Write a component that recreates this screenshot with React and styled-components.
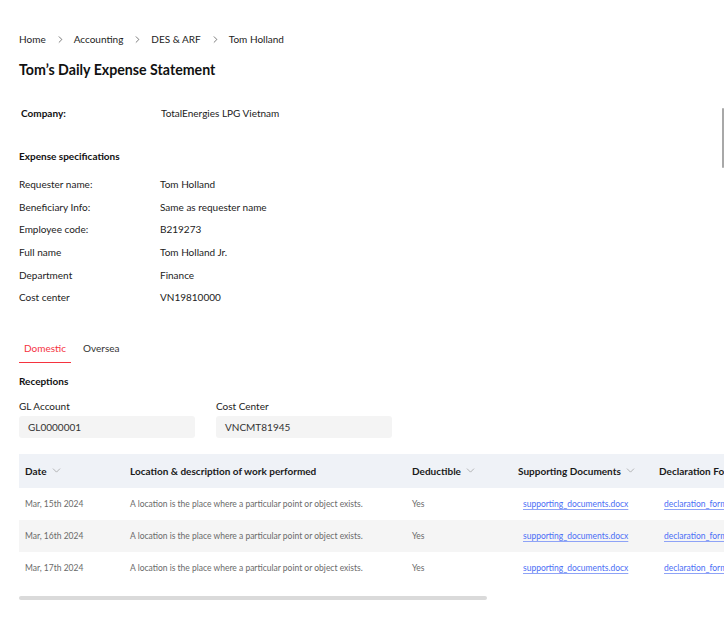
import React from "react";
import styled, { createGlobalStyle } from "styled-components";
import { ChevronDown, ChevronRight } from "lucide-react";

const GlobalStyle = createGlobalStyle`
  html, body {
    margin: 0;
    padding: 0;
    background: #fff;
    overflow: hidden;
  }
  body {
    font-family: Lato, "Noto Sans", sans-serif;
    color: #222;
  }
`;

const specs = [
  ["Requester name:", "Tom Holland"],
  ["Beneficiary Info:", "Same as requester name"],
  ["Employee code:", "B219273"],
  ["Full name", "Tom Holland Jr."],
  ["Department", "Finance"],
  ["Cost center", "VN19810000"],
];

const rows = [
  { date: "Mar, 15th 2024" },
  { date: "Mar, 16th 2024" },
  { date: "Mar, 17th 2024" },
];

const columns = [
  { title: "Date", width: 105, sort: true },
  { title: "Location & description of work performed", width: 282 },
  { title: "Deductible", width: 106, sort: true },
  { title: "Supporting Documents", width: 141, sort: true },
  { title: "Declaration Form", width: 160 },
];

const App = () => {
  return (
    <Page>
      <GlobalStyle />
      <Breadcrumb>
        {["Home", "Accounting", "DES & ARF", "Tom Holland"].map((item, i, arr) => (
          <React.Fragment key={item}>
            <span>{item}</span>
            {i < arr.length - 1 && (
              <Sep>
                <ChevronRight size={11} strokeWidth={1.4} />
              </Sep>
            )}
          </React.Fragment>
        ))}
      </Breadcrumb>

      <Title>Tom’s Daily Expense Statement</Title>

      <CompanyRow>
        <CompanyLabel>Company:</CompanyLabel>
        <Value>TotalEnergies LPG Vietnam</Value>
      </CompanyRow>

      <SectionTitle>Expense specifications</SectionTitle>
      <SpecList>
        {specs.map(([label, value]) => (
          <SpecRow key={label}>
            <Label>{label}</Label>
            <Value>{value}</Value>
          </SpecRow>
        ))}
      </SpecList>

      <Tabs>
        <Tab active>Domestic</Tab>
        <Tab>Oversea</Tab>
      </Tabs>

      <Receptions>Receptions</Receptions>
      <Fields>
        <Field>
          <FieldLabel>GL Account</FieldLabel>
          <Input>GL0000001</Input>
        </Field>
        <Field>
          <FieldLabel>Cost Center</FieldLabel>
          <Input>VNCMT81945</Input>
        </Field>
      </Fields>

      <Table>
        <HeadRow>
          {columns.map((c) => (
            <HeadCell key={c.title} w={c.width}>
              {c.title}
              {c.sort && (
                <SortIcon>
                  <ChevronDown size={13} strokeWidth={1.3} />
                </SortIcon>
              )}
            </HeadCell>
          ))}
        </HeadRow>
        {rows.map((r, i) => (
          <BodyRow key={r.date} striped={i % 2 === 1}>
            <Cell w={columns[0].width}>{r.date}</Cell>
            <Cell w={columns[1].width}>
              A location is the place where a particular point or object exists.
            </Cell>
            <Cell w={columns[2].width}>Yes</Cell>
            <Cell w={columns[3].width} link>
              <Link href="#">supporting_documents.docx</Link>
            </Cell>
            <Cell w={columns[4].width} link>
              <Link href="#">declaration_form.docx</Link>
            </Cell>
          </BodyRow>
        ))}
      </Table>

      <ScrollTrack>
        <ScrollThumb />
      </ScrollTrack>

      <PageScroll />
    </Page>
  );
};

export default App;

const Page = styled.div`
  position: relative;
  width: 724px;
  height: 619px;
  overflow: hidden;
  padding: 31px 0 0 19px;
  box-sizing: border-box;
`;

const Breadcrumb = styled.div`
  display: flex;
  align-items: center;
  font-size: 10px;
  color: #222;
  height: 16px;
`;

const Sep = styled.span`
  display: flex;
  align-items: center;
  margin: 0 8px 0 9px;
  color: #333;
`;

const Title = styled.h1`
  margin: 13px 0 0;
  font-size: 14.2px;
  font-weight: 700;
  line-height: 20px;
  color: #111;
`;

const CompanyRow = styled.div`
  display: flex;
  align-items: center;
  margin-top: 24px;
  height: 18px;
  font-size: 10px;
`;

const CompanyLabel = styled.span`
  width: 140px;
  padding-left: 2px;
  font-weight: 700;
  color: #111;
`;

const Value = styled.span`
  color: #222;
`;

const SectionTitle = styled.div`
  margin-top: 25px;
  font-size: 10px;
  font-weight: 700;
  color: #111;
  height: 18px;
  line-height: 18px;
`;

const SpecList = styled.div`
  display: flex;
  flex-direction: column;
  margin-top: 8px;
`;

const SpecRow = styled.div`
  display: flex;
  height: 22.6px;
  align-items: center;
  font-size: 10px;
`;

const Label = styled.span`
  width: 141px;
  color: #222;
`;

const Tabs = styled.div`
  display: flex;
  margin-top: 28px;
`;

const Tab = styled.div`
  padding: 0 5px;
  margin-right: ${(p) => (p.active ? "7px" : "0")};
  height: 26px;
  line-height: 22px;
  font-size: 10px;
  color: ${(p) => (p.active ? "#f5333f" : "#333")};
  border-bottom: 1.5px solid ${(p) => (p.active ? "#f5333f" : "transparent")};
  box-sizing: border-box;
`;

const Receptions = styled.div`
  margin-top: 9px;
  font-size: 10px;
  font-weight: 700;
  color: #111;
  height: 18px;
  line-height: 18px;
`;

const Fields = styled.div`
  display: flex;
  gap: 21px;
  margin-top: 9px;
`;

const Field = styled.div`
  display: flex;
  flex-direction: column;
  width: 176px;
`;

const FieldLabel = styled.div`
  font-size: 10px;
  color: #222;
  height: 14px;
  line-height: 14px;
  margin-bottom: 3px;
`;

const Input = styled.div`
  height: 22px;
  line-height: 22px;
  background: #f4f4f4;
  border-radius: 3px;
  padding: 0 9px;
  font-size: 10px;
  color: #333;
`;

const Table = styled.div`
  margin-top: 16px;
  width: 794px;
  display: flex;
  flex-direction: column;
`;

const HeadRow = styled.div`
  display: flex;
  height: 34px;
  align-items: center;
  background: #eff2f7;
`;

const HeadCell = styled.div`
  width: ${(p) => p.w}px;
  flex-shrink: 0;
  padding-left: 6px;
  box-sizing: border-box;
  display: flex;
  align-items: center;
  font-size: 10px;
  font-weight: 700;
  color: #1a1a1a;
  white-space: nowrap;
`;

const SortIcon = styled.span`
  display: flex;
  margin-left: 3px;
  color: #9a9a9a;
`;

const BodyRow = styled.div`
  display: flex;
  height: 32px;
  align-items: center;
  background: ${(p) => (p.striped ? "#f5f5f5" : "#fff")};
`;

const Cell = styled.div`
  width: ${(p) => p.w}px;
  flex-shrink: 0;
  padding: 2px 0 2px ${(p) => (p.link ? "11px" : "6px")};
  box-sizing: border-box;
  font-size: 8.5px;
  color: #6a6a6a;
  white-space: nowrap;
`;

const Link = styled.a`
  color: #4a6ef5;
  text-decoration: underline;
  text-decoration-color: #8ea3f7;
  text-underline-offset: 2px;
  font-size: 8.5px;
`;

const ScrollTrack = styled.div`
  margin-top: 12px;
  width: 468px;
  height: 4px;
`;

const ScrollThumb = styled.div`
  width: 100%;
  height: 100%;
  border-radius: 2px;
  background: #dadada;
`;

const PageScroll = styled.div`
  position: absolute;
  right: 0;
  top: 108px;
  width: 2px;
  height: 60px;
  background: #a8a8a8;
  border-radius: 1px;
`;
